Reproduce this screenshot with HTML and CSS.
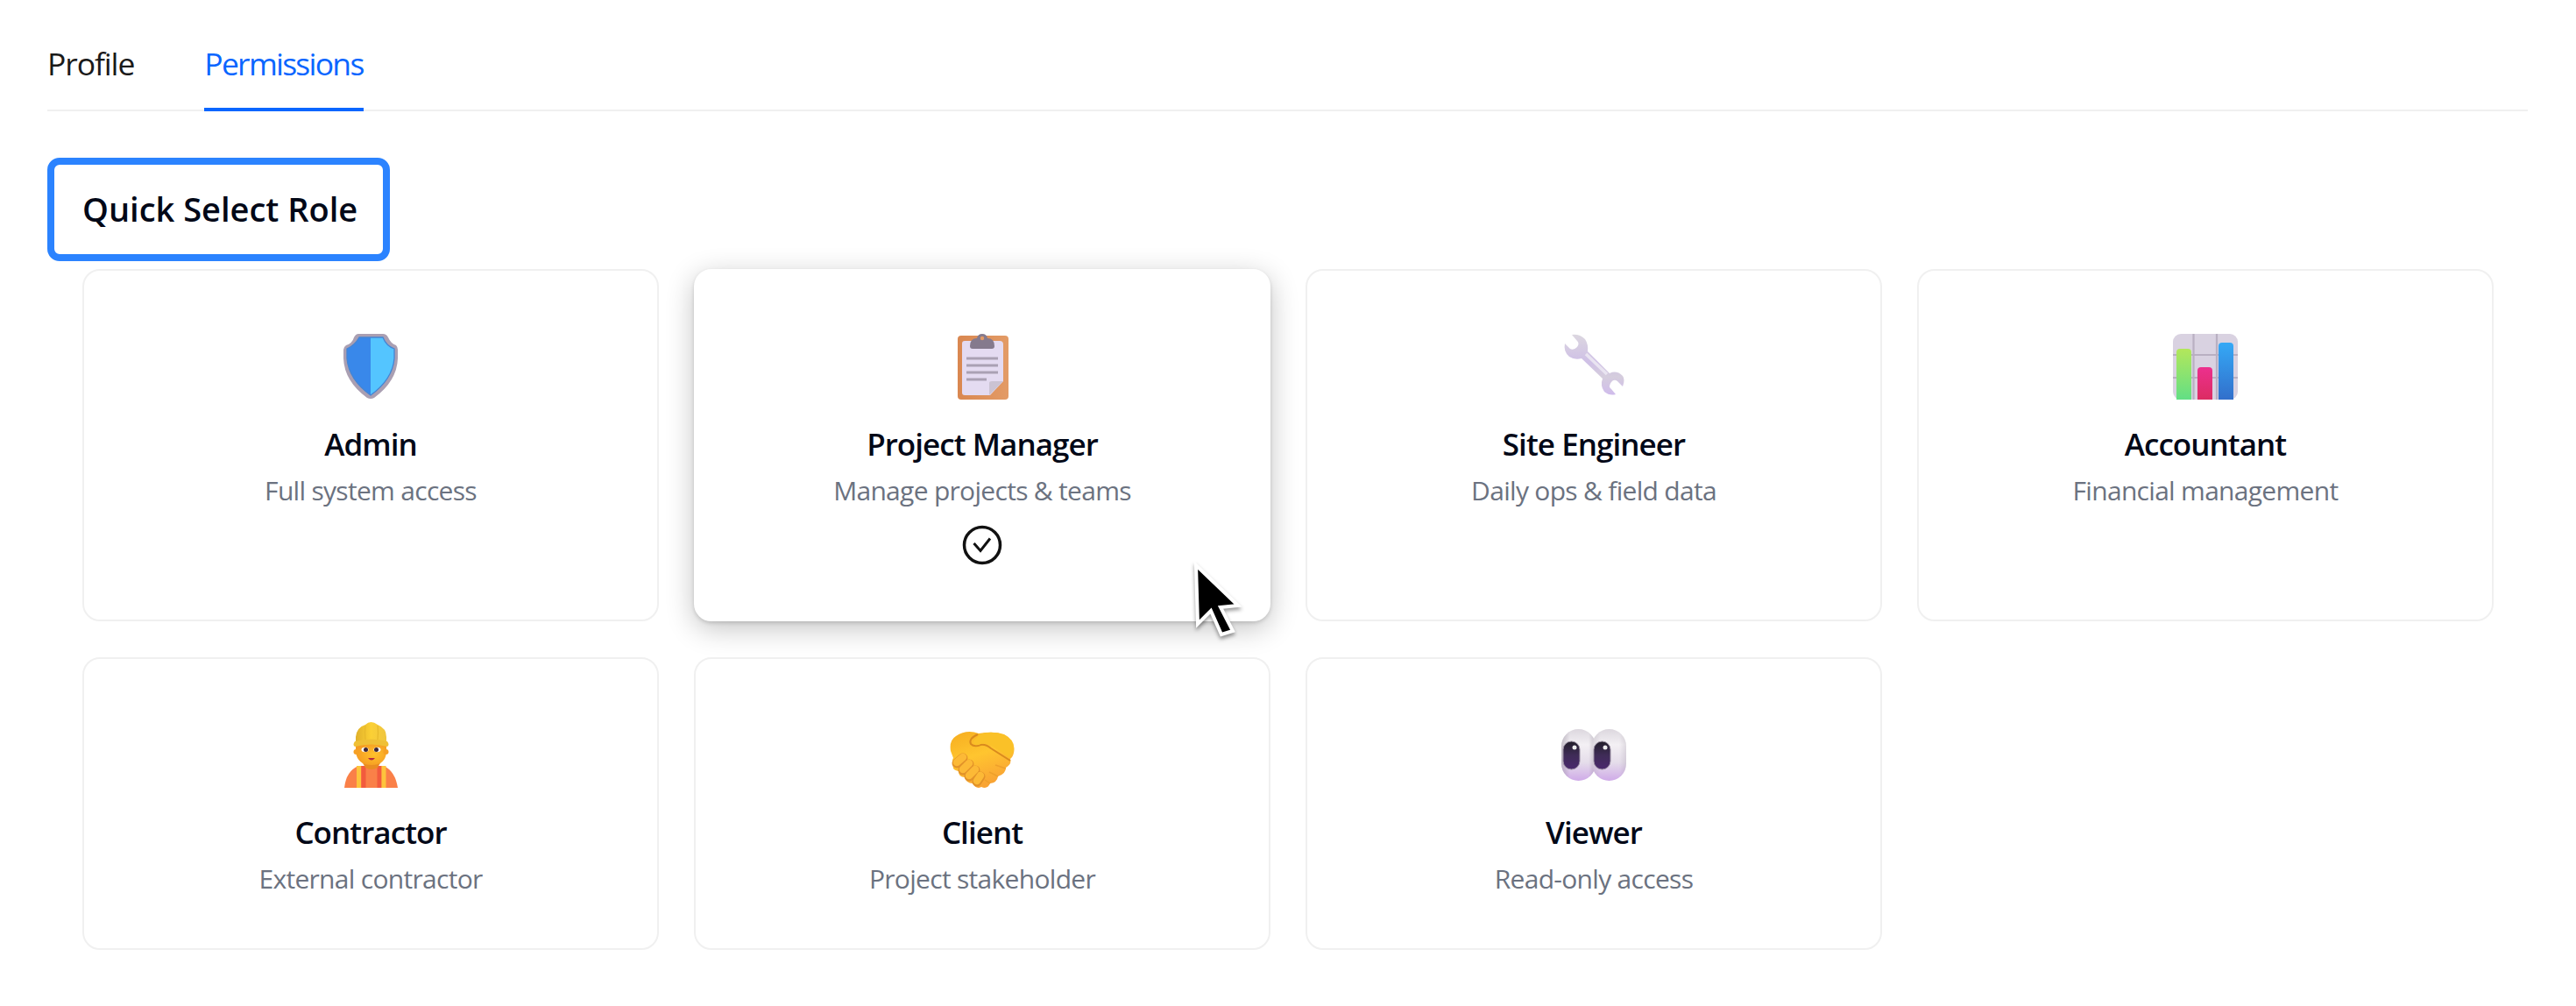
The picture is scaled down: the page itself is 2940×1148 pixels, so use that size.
FILE: index.html
```html
<!DOCTYPE html>
<html lang="en">
<head>
<meta charset="utf-8">
<title>Permissions</title>
<link rel="stylesheet" href="styles.css">
</head>
<body>
<nav class="tabs">
  <a class="tab">Profile</a>
  <a class="tab active">Permissions</a>
</nav>
<main class="panel">
  <h2 class="heading"><span>Quick Select Role</span></h2>
  <section class="grid">
    <article class="card">
      <svg class="icon" viewBox="0 0 76 76">
        <path d="M24 0H52Q56 0 58 4Q61 11 67 13Q69 15 69 18V28Q68 54 42 73Q38 75 34 73Q8 54 7 28V18Q7 15 10 13Q17 11 19 4Q21 0 24 0Z" fill="#aa9fb2"/>
        <path d="M25 4H38V70Q13 52 11 28V17Q20 13 25 4Z" fill="#3988ea"/>
        <path d="M38 4H52Q56 14 65 17V28Q63 52 38 70Z" fill="#54c5ff"/>
        <path d="M11 28V17Q20 13 25 4H52Q56 14 65 17V28Q63 52 38 70Q13 52 11 28Z" fill="none" stroke="#4485d4" stroke-width="1.3"/>
      </svg>
      <h3 class="name">Admin</h3>
      <p class="desc">Full system access</p>
    </article>
    <article class="card selected">
      <svg class="icon" viewBox="0 0 76 76">
        <defs><linearGradient id="board"><stop offset="0" stop-color="#d98750"/><stop offset="1" stop-color="#e39b66"/></linearGradient></defs>
        <rect x="10" y="2" width="58" height="73" rx="4" fill="url(#board)"/>
        <path d="M18 8H58Q62 8 62 12V54L47 70H18Q15 70 15 67V11Q15 8 18 8Z" fill="#e4dbf1"/>
        <path d="M46 56Q46 54 49 54H62L46 70Z" fill="#cbc3d3"/>
        <path d="M24 14Q24 5 32 5Q33 0 38 0T44 5Q52 5 52 14Q52 17 49 17H27Q24 17 24 14Z" fill="#857a8d"/>
        <circle cx="38" cy="5" r="2.200" fill="#e39b66"/>
        <path d="M20 28H56M20 36H56M20 44H56M20 52H43" stroke="#aaa1b4" stroke-width="3.200"/>
      </svg>
      <h3 class="name">Project Manager</h3>
      <p class="desc">Manage projects &amp; teams</p>
      <svg class="check" viewBox="0 0 46 46"><circle cx="23" cy="23" r="20.500"/><path d="M13.500 21L21 29.500L32 15.500"/></svg>
    </article>
    <article class="card">
      <svg class="icon" viewBox="0 0 76 76">
        <defs><linearGradient id="steel" x2="0" y2="1"><stop offset="0" stop-color="#dcd7e0"/><stop offset=".45" stop-color="#cfc0e6"/><stop offset=".7" stop-color="#d5cddd"/><stop offset="1" stop-color="#d0bcec"/></linearGradient></defs>
        <path d="M13 1Q22 0 28 6Q32 12 31 20L56 45Q64 41 71 48Q74 52 71 60L65 54Q61 51 58 55Q54 60 58 63L63 69Q56 71 50 66Q45 59 48 51L24 28Q16 30 10 26Q3 20 5 11L11 17Q15 19 19 15Q22 11 19 8Z" fill="url(#steel)"/>
        <path d="M29 23L53 46" stroke="#e9e4f1" stroke-width="3.500"/>
      </svg>
      <h3 class="name">Site Engineer</h3>
      <p class="desc">Daily ops &amp; field data</p>
    </article>
    <article class="card">
      <svg class="icon" viewBox="0 0 76 76">
        <defs>
          <linearGradient id="lime" x2="0" y2="1"><stop offset="0" stop-color="#b3e75b"/><stop offset="1" stop-color="#62df85"/></linearGradient>
          <linearGradient id="pink" x2="0" y2="1"><stop offset="0" stop-color="#ec308e"/><stop offset="1" stop-color="#dc2c62"/></linearGradient>
          <linearGradient id="blue" x2="0" y2="1"><stop offset="0" stop-color="#35a9f6"/><stop offset="1" stop-color="#326fcb"/></linearGradient>
        </defs>
        <rect x="1" y="0" width="74" height="75" rx="9" fill="#d9d2e1"/>
        <path d="M24.500 0V75M51 0V75M1 24H75M1 50H75" stroke="#b9b0c2" stroke-width="2.200"/>
        <path d="M5 75V21Q5 17 9 17H18Q22 17 22 21V75Z" fill="url(#lime)"/>
        <path d="M29 75V42Q29 38 33 38H42Q46 38 46 42V75Z" fill="url(#pink)"/>
        <path d="M53 75V14Q53 10 57 10H66Q70 10 70 14V75Z" fill="url(#blue)"/>
      </svg>
      <h3 class="name">Accountant</h3>
      <p class="desc">Financial management</p>
    </article>
    <article class="card">
      <svg class="icon" viewBox="0 0 76 76">
        <defs>
          <radialGradient id="face" cx=".6" cy=".5" r=".6"><stop offset="0" stop-color="#ffc12b"/><stop offset="1" stop-color="#f59b22"/></radialGradient>
          <linearGradient id="helmet"><stop offset="0" stop-color="#e0b02a"/><stop offset=".5" stop-color="#fbd035"/><stop offset="1" stop-color="#efc540"/></linearGradient>
        </defs>
        <path d="M8 75Q10 56 24 50H53Q66 56 69 75Z" fill="#fa8048"/>
        <path d="M30 50V75M48 50V75" stroke="#f25b3d" stroke-width="5"/>
        <path d="M24.500 50V75M53 50V75" stroke="#fdc43c" stroke-width="5"/>
        <path d="M28 45H50L46 52Q39 56 32 52Z" fill="#ea8d22"/>
        <path d="M21 25H56V34Q55 49 39 49T21 34Z" fill="url(#face)"/>
        <circle cx="21.500" cy="34" r="3" fill="#f6a024"/><circle cx="55.500" cy="34" r="3" fill="#f6a024"/>
        <path d="M21 24V17Q22 6 32 3Q38-3 46 3Q56 7 56 17V24Z" fill="url(#helmet)"/>
        <path d="M32 4Q31 12 32 20M46 4Q47 12 46 20" stroke="#e6b82b" stroke-width="1.200" fill="none"/>
        <path d="M20 22Q39 17 57 22Q60 26 57 28Q39 23 20 28Q17 26 20 22Z" fill="#efc036"/>
        <ellipse cx="31.500" cy="31.500" rx="4" ry="2.700" fill="#fff"/><ellipse cx="45.500" cy="31.500" rx="4" ry="2.700" fill="#fff"/>
        <circle cx="32.500" cy="31.500" r="2.500" fill="#3b2536"/><circle cx="44.500" cy="31.500" r="2.500" fill="#3b2536"/>
        <path d="M35 41H43Q39 46 35 41Z" fill="#b52a3e"/>
      </svg>
      <h3 class="name">Contractor</h3>
      <p class="desc">External contractor</p>
    </article>
    <article class="card">
      <svg class="icon" viewBox="0 0 76 76">
        <defs><linearGradient id="hand" x2=".4" y2="1"><stop offset="0" stop-color="#f6ad20"/><stop offset=".5" stop-color="#ffc52f"/><stop offset="1" stop-color="#f9a434"/></linearGradient></defs>
        <path d="M2 33Q0 21 8 16Q20 8 34 13Q52 10 63 14Q77 21 74 35Q73 40 70 42Q72 48 65 52Q65 59 56 62Q55 69 47 70Q44 77 37 74Q31 77 27 70Q20 70 18 63Q11 63 11 56Q3 55 5 48Q3 44 5 41Z" fill="url(#hand)"/>
        <path d="M33 14Q22 19 25 25Q29 29 36 26Q42 25 48 30L70 44" fill="none" stroke="#d98a1e" stroke-width="2"/>
        <path d="M35 14Q49 9 64 15Q76 23 73 34L69 41Q60 34 49 27Q41 22 34 26Q27 27 28 22Z" fill="#fac128"/>
        <g stroke="#e29229" stroke-width="11" stroke-linecap="round"><path d="M9 47L16 41M16 55L23 48M23 62L30 55M32 68L36 62"/></g>
        <g stroke="#fcb936" stroke-width="8.500" stroke-linecap="round"><path d="M9 46L16 40M16 54L23 47M23 61L30 54M32 67L36 61"/></g>
        <path d="M53 49L65 53M46 57L56 62M41 66L47 70" stroke="#eea02c" stroke-width="1.500"/>
      </svg>
      <h3 class="name">Client</h3>
      <p class="desc">Project stakeholder</p>
    </article>
    <article class="card">
      <svg class="icon" viewBox="0 0 76 76">
        <defs>
          <linearGradient id="eye" x2="0" y2="1"><stop offset="0" stop-color="#dcd7de"/><stop offset=".3" stop-color="#f3f0f4"/><stop offset=".65" stop-color="#e5ddea"/><stop offset="1" stop-color="#cfaae8"/></linearGradient>
          <linearGradient id="pupil" x2="0" y2="1"><stop offset="0" stop-color="#231f2b"/><stop offset=".5" stop-color="#3f2c57"/><stop offset="1" stop-color="#4b296e"/></linearGradient>
          <linearGradient id="rim"><stop offset="0" stop-color="#7d7385" stop-opacity=".4"/><stop offset=".25" stop-color="#7d7385" stop-opacity="0"/><stop offset=".8" stop-color="#7d7385" stop-opacity="0"/><stop offset="1" stop-color="#7d7385" stop-opacity=".35"/></linearGradient>
        </defs>
        <rect x="1" y="8" width="39" height="59" rx="19.500" fill="url(#eye)"/><rect x="1" y="8" width="39" height="59" rx="19.500" fill="url(#rim)"/>
        <rect x="36" y="8" width="39" height="59" rx="19.500" fill="url(#eye)"/><rect x="36" y="8" width="39" height="59" rx="19.500" fill="url(#rim)" opacity=".5"/>
        <rect x="3" y="22" width="19" height="32" rx="9.500" fill="url(#pupil)" stroke="#9b91a3"/><rect x="38" y="22" width="19" height="32" rx="9.500" fill="url(#pupil)" stroke="#9b91a3"/>
        <circle cx="16" cy="29" r="2.500" fill="#eee"/><circle cx="51" cy="29" r="2.500" fill="#eee"/>
      </svg>
      <h3 class="name">Viewer</h3>
      <p class="desc">Read-only access</p>
    </article>
  </section>
</main>
<svg class="cursor" viewBox="0 0 60 92"><path d="M4 4L6 71L21 56L33 83L46 79L32 52L52 50Z" fill="#000" stroke="#fff" stroke-width="4"/></svg>
</body>
</html>
```
FILE: styles.css
```css
* { box-sizing: border-box; }
body {
  margin: 0;
  height: 1148px;
  padding: 0 55px 0 54px;
  background: #fff;
  color: #020817;
  font-family: "Open Sans", "Noto Sans", sans-serif;
  overflow: hidden;
}
h2, h3, p { margin: 0; }
.tabs {
  display: flex;
  gap: 80px;
  height: 127px;
  border-bottom: 2px solid #f0f0f0;
}
.tab {
  height: 127px;
  padding-top: 47px;
  font-size: 35.500px;
  line-height: 50px;
  letter-spacing: -1.100px;
  color: #1a1a1a;
  white-space: nowrap;
}
.tab.active {
  color: #0a66ff;
  border-bottom: 4px solid #0a66ff;
  letter-spacing: -1.750px;
}
.panel { padding-top: 53px; }
.heading {
  width: 391px;
  height: 118px;
  border: 8px solid #2b83ff;
  border-radius: 14px;
  padding-left: 32px;
  font-size: 38px;
  font-weight: 600;
  line-height: 101px;
  white-space: nowrap;
}
.grid {
  display: grid;
  grid-template-columns: repeat(4, 1fr);
  grid-template-rows: 402px 334px;
  gap: 41px 40px;
  margin: 9px 39px 0 40px;
}
.card {
  border: 2px solid #f0f0f0;
  border-radius: 20px;
  display: flex;
  flex-direction: column;
  align-items: center;
  padding-top: 72px;
  background: #fff;
}
.selected {
  border-color: #fff;
  box-shadow: 0 2px 4px rgba(0,0,0,.14), 0 8px 32px rgba(0,0,0,.24);
}
.icon { width: 76px; height: 76px; display: block; }
.name {
  margin-top: 25px;
  font-size: 35px;
  line-height: 50px;
  font-weight: 600;
  letter-spacing: -.95px;
}
.desc {
  margin-top: 6px;
  font-size: 30px;
  line-height: 44px;
  color: #6b7280;
  letter-spacing: -.7px;
}
.check {
  width: 46px;
  height: 46px;
  margin-top: 17px;
  fill: none;
  stroke: #111;
  stroke-width: 3.500;
}
.check path { stroke-width: 3; }
.cursor {
  position: absolute;
  left: 1361px;
  top: 641px;
  width: 60px;
  height: 92px;
  filter: drop-shadow(0 3px 2px rgba(0,0,0,.4));
}
```
